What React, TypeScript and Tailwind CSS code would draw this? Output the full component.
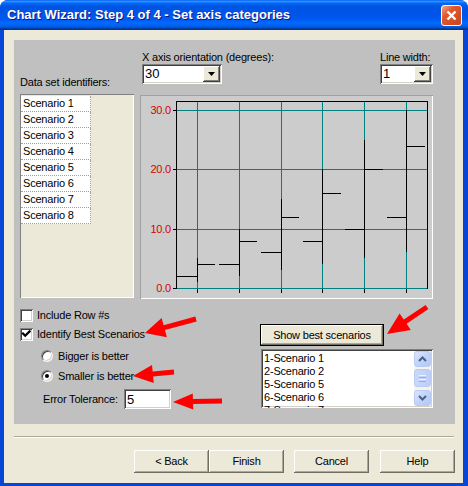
import React from "react";

const SUNKEN2 =
  "shadow-[inset_1px_1px_#808080,inset_-1px_-1px_#ffffff,inset_2px_2px_#404040,inset_-2px_-2px_#D4D0C8]";
const RAISED =
  "shadow-[inset_-1px_-1px_#404040,inset_1px_1px_#ffffff,inset_-2px_-2px_#808080]";
const BTN =
  "shadow-[inset_-1px_-1px_#716F64,inset_1px_1px_#ffffff,inset_-2px_-2px_#ACA899]";

function arrowPoints(tx: number, ty: number, sx: number, sy: number, L: number, W: number, w: number) {
  const dx = tx - sx;
  const dy = ty - sy;
  const len = Math.sqrt(dx * dx + dy * dy);
  const ux = dx / len;
  const uy = dy / len;
  const nx = -uy;
  const ny = ux;
  const bx = tx - ux * L;
  const by = ty - uy * L;
  const p = [
    [sx + nx * w, sy + ny * w],
    [bx + nx * w, by + ny * w],
    [bx + nx * W, by + ny * W],
    [tx, ty],
    [bx - nx * W, by - ny * W],
    [bx - nx * w, by - ny * w],
    [sx - nx * w, sy - ny * w],
  ];
  return p.map((q) => `${q[0].toFixed(1)},${q[1].toFixed(1)}`).join(" ");
}

function DropArrow() {
  return (
    <svg width="7" height="4" viewBox="0 0 7 4">
      <polygon points="0,0 7,0 3.5,4" fill="#000" />
    </svg>
  );
}

function Select({ value, width }: { value: string; width: string }) {
  return (
    <div className={`${width} h-[20px] bg-white ${SUNKEN2} p-[2px] flex items-center`}>
      <span className="flex-1 pl-[1px] text-[13px] leading-[16px] tracking-normal">{value}</span>
      <div className={`w-[17px] h-[16px] bg-[#ECE9D8] ${RAISED} flex items-center justify-center`}>
        <DropArrow />
      </div>
    </div>
  );
}

function Chart() {
  const teal = "#008080";
  const black = "#000000";
  const H = (r: number, x1: number, x2: number, c: string, k: string) => (
    <rect key={k} x={x1} y={r} width={x2 - x1} height={1} fill={c} />
  );
  const V = (col: number, y1: number, y2: number, c: string, k: string) => (
    <rect key={k} x={col} y={y1} width={1} height={y2 - y1} fill={c} />
  );
  const gridRows = [110, 169, 229, 288];
  const gridCols = [197, 239, 281, 322, 364, 406];
  const labels = ["30.0", "20.0", "10.0", "0.0"];
  const bars = [
    { c: 197, lo: 258, hi: 282, l: [276, 176], r: [264, 215] },
    { c: 239, lo: 229, hi: 276, l: [264, 219], r: [241, 257] },
    { c: 281, lo: 199, hi: 270, l: [252, 261], r: [217, 299] },
    { c: 322, lo: 169, hi: 264, l: [241, 303], r: [193, 341] },
    { c: 364, lo: 140, hi: 258, l: [229, 345], r: [169, 383] },
    { c: 406, lo: 110, hi: 252, l: [217, 387], r: [146, 425] },
  ];
  return (
    <svg width={293} height={204} viewBox="140 95 293 204" shapeRendering="crispEdges" className="block">
      {gridRows.map((r, i) => H(r, 176, 428, teal, "gr" + i))}
      {gridCols.map((c, i) => V(c, 102, 288, teal, "gc" + i))}
      {gridCols.map((c, i) => V(c, 289, 293, black, "tk" + i))}
      {gridRows.map((r, i) => H(r, 173, 176, black, "yt" + i))}
      {H(101, 176, 428, black, "top")}
      {V(176, 101, 289, black, "left")}
      {V(427, 101, 289, black, "right")}
      {bars.map((b, i) => (
        <g key={"b" + i}>
          {V(b.c, b.lo, b.hi, black, "v")}
          {H(b.l[0], b.l[1], b.c, black, "l")}
          {H(b.r[0], b.c, b.r[1], black, "r")}
        </g>
      ))}
      {gridRows.map((r, i) => (
        <text
          key={"lab" + i}
          x={171}
          y={r + 4}
          textAnchor="end"
          fill="#D40000"
          fontSize="11"
          fontFamily="'Liberation Sans', Arial, sans-serif"
        >
          {labels[i]}
        </text>
      ))}
    </svg>
  );
}

function Checkbox({ checked }: { checked?: boolean }) {
  return (
    <div className={`w-[13px] h-[13px] bg-white ${SUNKEN2} flex items-center justify-center shrink-0`}>
      {checked && (
        <svg width="13" height="13" viewBox="0 0 13 13">
          <polyline points="3,5.5 5.2,7.8 9.6,3.4" fill="none" stroke="#000" strokeWidth="2.2" strokeLinecap="square" />
        </svg>
      )}
    </div>
  );
}

function Radio({ checked }: { checked?: boolean }) {
  return (
    <div className="w-[12px] h-[12px] rounded-full bg-white border border-t-[#808080] border-l-[#808080] border-b-[#F4F3EE] border-r-[#F4F3EE] shadow-[inset_1px_1px_#404040,inset_-1px_-1px_#D4D0C8] flex items-center justify-center shrink-0">
      {checked && <div className="w-[4px] h-[4px] rounded-full bg-black" />}
    </div>
  );
}

function ScrollBtn({ up }: { up?: boolean }) {
  return (
    <div className="w-[17px] h-[16px] rounded-[3px] border border-[#B9CAF3] bg-[linear-gradient(135deg,#DDE6FD,#C1D3FB_50%,#B4C8F6)] flex items-center justify-center">
      <svg width="9" height="6" viewBox="0 0 9 6">
        <polyline
          points={up ? "1,5 4.5,1.5 8,5" : "1,1 4.5,4.5 8,1"}
          fill="none"
          stroke="#4D6185"
          strokeWidth="2"
        />
      </svg>
    </div>
  );
}

function TitleBar() {
  return (
    <div className="h-[30px] shrink-0 flex items-center pl-[7px] pr-[6px] bg-[linear-gradient(180deg,#0058EE_0%,#3593FF_4%,#288EFF_6%,#127DFF_8%,#036FFC_10%,#0262EE_14%,#0057E5_20%,#0054E3_24%,#0055EB_56%,#005BF5_66%,#026AFE_76%,#0062EF_86%,#0052D6_92%,#0040AB_94%,#003092_100%)]">
      <span className="text-white font-bold text-[13px] tracking-normal leading-[16px] [text-shadow:1px_1px_0_#0A1883]">
        Chart Wizard: Step 4 of 4 - Set axis categories
      </span>
      <div className="ml-auto w-[21px] h-[21px] rounded-[3px] border border-white bg-[linear-gradient(135deg,#F0A58C,#E0582F_35%,#C9431C_100%)] flex items-center justify-center">
        <svg width="11" height="11" viewBox="0 0 11 11">
          <line x1="1.5" y1="1.5" x2="9.5" y2="9.5" stroke="#fff" strokeWidth="2.4" />
          <line x1="9.5" y1="1.5" x2="1.5" y2="9.5" stroke="#fff" strokeWidth="2.4" />
        </svg>
      </div>
    </div>
  );
}

export default function App() {
  const scenarios = ["Scenario 1", "Scenario 2", "Scenario 3", "Scenario 4", "Scenario 5", "Scenario 6", "Scenario 7", "Scenario 8"];
  const best = ["1-Scenario 1", "2-Scenario 2", "5-Scenario 5", "6-Scenario 6", "7-Scenario 7"];
  const arrows = [
    arrowPoints(145, 333, 196, 319, 20, 10, 2.5),
    arrowPoints(133, 376, 174, 372, 20, 9, 2.5),
    arrowPoints(173, 402, 222, 401, 20, 8, 2.5),
    arrowPoints(387, 334, 427, 307, 22, 10, 2.5),
  ];
  return (
    <div className="relative w-[468px] h-[486px] bg-white font-['Liberation_Sans',Arial,sans-serif] text-[11px] tracking-[-0.2px] leading-[13px] text-black">
      <div className="flex flex-col w-full h-full rounded-t-[8px] overflow-hidden bg-[#0846D8]">
        <TitleBar />
        <div className="flex-1 ml-[4px] mr-[5px] mb-[3px] bg-[#ECE9D8] flex flex-col pl-[10px] pr-[8px] pt-[10px]">
          {/* grey panel */}
          <div className="w-[441px] h-[384px] bg-[#C0C0C0] flex flex-col">
            <div className="flex pl-[6px] pt-[11px]">
              <div className="w-[114px] flex flex-col">
                <div className="mt-[25px] h-[13px] whitespace-nowrap">Data set identifiers:</div>
                <div className="mt-[5px] h-[204px] bg-[#ECE9D8] shadow-[inset_1px_1px_#808080,inset_-1px_-1px_#ffffff] pt-[2px] pl-[1px]">
                  {scenarios.map((s) => (
                    <div
                      key={s}
                      className="w-[70px] h-[16px] bg-white border-b border-r border-dotted border-[#A0A0A0] pl-[2px] leading-[15px] whitespace-nowrap"
                    >
                      {s}
                    </div>
                  ))}
                </div>
              </div>
              <div className="ml-[6px] w-[293px] flex flex-col">
                <div className="h-[33px] flex justify-between">
                  <div className="ml-[2px] flex flex-col">
                    <div className="h-[13px] whitespace-nowrap">X axis orientation (degrees):</div>
                    <Select value="30" width="w-[80px]" />
                  </div>
                  <div className="flex flex-col">
                    <div className="h-[13px] whitespace-nowrap">Line width:</div>
                    <Select value="1" width="w-[53px]" />
                  </div>
                </div>
                <div className="mt-[11px] h-[204px] bg-[#CCCCCC] shadow-[inset_1px_1px_#A0A0A0,inset_-1px_-1px_#ffffff]">
                  <Chart />
                </div>
              </div>
            </div>
            <div className="flex pl-[6px]">
              <div className="w-[240px] pt-[10px] flex flex-col">
                <div className="h-[13px] flex items-center">
                  <Checkbox />
                  <span className="ml-[4px]">Include Row #s</span>
                </div>
                <div className="mt-[6px] h-[13px] flex items-center">
                  <Checkbox checked />
                  <span className="ml-[4px]">Identify Best Scenarios</span>
                </div>
                <div className="mt-[9px] pl-[21px] h-[12px] flex items-center">
                  <Radio />
                  <span className="ml-[5px]">Bigger is better</span>
                </div>
                <div className="mt-[8px] pl-[21px] h-[12px] flex items-center">
                  <Radio checked />
                  <span className="ml-[5px]">Smaller is better</span>
                </div>
                <div className="mt-[7px] pl-[23px] h-[20px] flex items-center">
                  <span className="w-[81px]">Error Tolerance:</span>
                  <div className={`w-[47px] h-[20px] bg-white ${SUNKEN2} pl-[3px] flex items-center text-[13px] tracking-normal`}>
                    5
                  </div>
                </div>
              </div>
              <div className="pt-[25px] flex flex-col">
                <div className={`w-[124px] h-[22px] border border-black bg-[#ECE9D8] ${BTN} flex items-center justify-center`}>
                  Show best scenarios
                </div>
                <div className={`mt-[3px] ml-[1px] w-[172px] h-[59px] bg-white ${SUNKEN2} flex overflow-hidden`}>
                  <div className="flex-1 pl-[3px] pt-[3px] overflow-hidden">
                    {best.map((b) => (
                      <div key={b} className="h-[13px] whitespace-nowrap">
                        {b}
                      </div>
                    ))}
                  </div>
                  <div className="my-[2px] mr-[2px] w-[17px] bg-[#F4F3EE] flex flex-col">
                    <ScrollBtn up />
                    <div className="mt-[2px] w-[17px] h-[18px] rounded-[3px] border border-[#B9CAF3] bg-[linear-gradient(90deg,#C9D8FC,#BCCFFA)] flex flex-col items-center justify-center gap-[1px]">
                      <div className="w-[7px] h-[1px] bg-[#EEF3FE]" />
                      <div className="w-[7px] h-[1px] bg-[#8CB0F8]" />
                      <div className="w-[7px] h-[1px] bg-[#EEF3FE]" />
                      <div className="w-[7px] h-[1px] bg-[#8CB0F8]" />
                    </div>
                    <div className="flex-1" />
                    <ScrollBtn />
                  </div>
                </div>
              </div>
            </div>
          </div>
          <div className="mt-[12px] w-[440px] h-[2px] border-t border-b border-t-[#ACA899] border-b-white" />
          <div className="mt-[12px] flex justify-end">
            <div className={`w-[75px] h-[23px] bg-[#ECE9D8] ${BTN} flex items-center justify-center`}>&lt; Back</div>
            <div className={`w-[75px] h-[23px] bg-[#ECE9D8] ${BTN} flex items-center justify-center`}>Finish</div>
            <div className={`ml-[10px] w-[75px] h-[23px] bg-[#ECE9D8] ${BTN} flex items-center justify-center`}>Cancel</div>
            <div className={`ml-[11px] w-[75px] h-[23px] bg-[#ECE9D8] ${BTN} flex items-center justify-center`}>Help</div>
          </div>
        </div>
      </div>
      <svg className="absolute inset-0 pointer-events-none" width="468" height="486" viewBox="0 0 468 486">
        {arrows.map((p, i) => (
          <polygon key={i} points={p} fill="#FF0000" />
        ))}
      </svg>
    </div>
  );
}
